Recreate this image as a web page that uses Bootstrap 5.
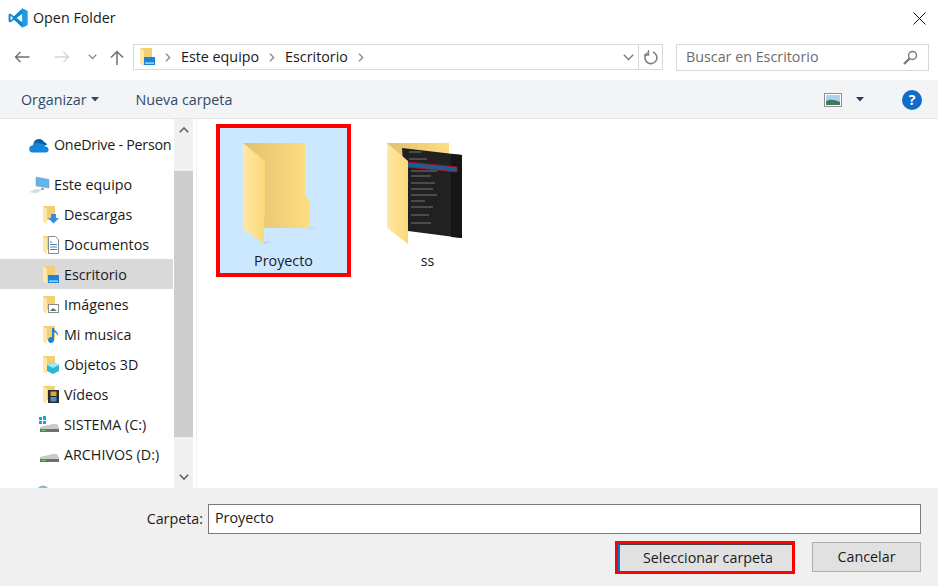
<!DOCTYPE html>
<html lang="es">
<head>
    <meta charset="UTF-8">
    <title>Open Folder</title>
    <link href="https://cdn.jsdelivr.net/npm/bootstrap@5.3.2/dist/css/bootstrap.min.css" rel="stylesheet">
    <script src="https://cdn.jsdelivr.net/npm/bootstrap@5.3.2/dist/js/bootstrap.bundle.min.js"></script>
    <style>
        html, body { height: 100%; overflow: hidden; }
        body { font-family: "Open Sans", "Noto Sans", sans-serif; font-size: 14.3px; color: #1a1a1a; background: #fff; }
        .dlg { width: 938px; height: 586px; }
        .title-bar { height: 36px; padding: 0 12px 0 8px; }
        .title-text { margin-left: 5px; }
        .nav-bar { height: 44px; padding: 0 9px 2px 14px; }
        .nav-chev { margin-left: 18px; }
        .nav-up { margin-left: 13px; }
        .addr-box { width: 530px; height: 26px; margin-left: 9px; border: 1px solid #d9d9d9; padding-left: 5px; }
        .addr-end { width: 24px; height: 100%; border-left: 1px solid #d9d9d9; }
        .addr-first { margin-left: 9px; }
        .crumb { margin: 0 10px; }
        .search-box { width: 253px; height: 27px; margin-left: 13px; border: 1px solid #d9d9d9; padding: 0 10px 0 9px; color: #6d6d6d; }
        .cmd-bar { height: 39px; background: #f3f4f6; border-bottom: 1px solid #e5e5e5; padding: 1px 16px 0 21px; color: #2e4a6b; }
        .new-folder { margin-left: 36px; }
        .view-caret { margin-left: 14px; }
        .help-mark { margin-left: 37px; }
        .main-area { height: 369px; overflow: hidden; }
        .side-pane { width: 173px; padding-top: 10px; overflow: hidden; flex: none; }
        .side-row { height: 30px; padding-top: 2px; white-space: nowrap; overflow: hidden; }
        .side-root { padding-left: 29px; }
        .side-sub { padding-left: 42px; }
        .side-row svg { flex: none; margin-right: 4px; }
        .side-tight { letter-spacing: -.25px; }
        .side-disk-row { padding-left: 38px; }
        .side-gap { height: 10px; }
        .side-on { background: #d9d9d9; }
        .side-last { padding-left: 36px; padding-top: 6px; }
        .scroll-col { width: 19px; margin-left: 1px; background: #f0f0f0; flex: none; }
        .scroll-btn { height: 35px; }
        .scroll-thumb { height: 266px; background: #cdcdcd; margin-top: 17px; }
        .scroll-end { height: 51px; }
        .files-pane { padding: 7px 0 0 21px; border-left: 1px solid #f0f0f0; margin-left: 3px; gap: 13px; }
        .file-tile { width: 131px; height: 149px; padding-top: 17px; }
        .file-on { background: #cce8ff; outline: 4px solid #f00; outline-offset: -2px; }
        .file-name { margin-top: 5px; }
        .foot-bar { height: 98px; background: #f0f0f0; padding: 16px 17px 0 0; }
        .foot-input { width: 713px; height: 30px; margin-left: 5px; background: #fff; border: 1px solid #7a7a7a; padding: 0 6px; line-height: 25px; }
        .foot-btns { margin-top: 8px; gap: 20px; }
        .win-btn { background: #e1e1e1; border: 1px solid #adadad; font-size: 14.3px; color: #1a1a1a; padding: 0; }
        .btn-select { width: 174px; height: 27px; padding-left: 4px; border: 0; border-left: 2px solid #0078d7; border-top: 1px solid #444; box-shadow: 0 0 0 3px #f00; }
        .btn-cancel { width: 109px; height: 30px; }
    </style>
</head>
<body>
<svg width="0" height="0" class="position-absolute">
    <defs>
        <linearGradient id="fBack" x1="0" x2="1" y1="0" y2="0"><stop offset="0" stop-color="#e2c070"/><stop offset="1" stop-color="#ffdd80"/></linearGradient>
        <linearGradient id="fFront" x1="0" x2="1" y1="0" y2="0"><stop offset="0" stop-color="#ffe8a6"/><stop offset="1" stop-color="#fbd878"/></linearGradient>
        <symbol id="mini-folder" viewBox="0 0 14 18">
            <path d="M1 0h12v14H5v4l-4-3z" fill="#f3cf73"/>
            <path d="M1 0l4 3v15l-4-3z" fill="#ffe8a6"/>
        </symbol>
    </defs>
</svg>

<div class="dlg d-flex flex-column">
    <div class="title-bar d-flex align-items-center">
        <svg width="20" height="20" viewBox="0 0 20 20"><path d="M14.300 .6 19.400 3v14l-5.100 2.400-8.400-7.700-3.600 2.800L.6 13.400V6.600l1.700-1.100 3.600 2.800z" fill="#0f85cf"/><path d="M14.400 5.600 8.600 10l5.800 4.400z" fill="#fff"/><path d="M2.600 7.400 5 10l-2.400 2.600z" fill="#fff"/><path d="M14.300 .6 19.400 3v14l-5.100 2.400z" fill="#1f9ce6"/></svg>
        <span class="title-text">Open Folder</span>
        <svg class="ms-auto" width="13" height="13" viewBox="0 0 13 13"><path d="M.5.5l12 12M12.500.5l-12 12" stroke="#111" fill="none"/></svg>
    </div>

    <div class="nav-bar d-flex align-items-center">
        <svg width="16" height="12" viewBox="0 0 16 12"><path d="M15.500 6H1.500M6.500 1l-5 5 5 5" fill="none" stroke="#6f6f6f" stroke-width="1.400"/></svg>
        <svg class="ms-4" width="16" height="12" viewBox="0 0 16 12"><path d="M.5 6h14M9.500 1l5 5-5 5" fill="none" stroke="#d4d4d4" stroke-width="1.400"/></svg>
        <svg class="nav-chev" width="9" height="6" viewBox="0 0 9 6"><path d="M.8.8l3.700 3.700L8.200.8" fill="none" stroke="#8a8a8a" stroke-width="1.300"/></svg>
        <svg class="nav-up" width="14" height="15" viewBox="0 0 14 15"><path d="M7 15V1.500M1 7.500l6-6 6 6" fill="none" stroke="#6f6f6f" stroke-width="1.500"/></svg>
        <div class="addr-box d-flex align-items-center">
            <svg width="17" height="18" viewBox="0 0 17 18"><use href="#mini-folder" width="14" height="18"/><rect x="5" y="9" width="11" height="8" fill="#1b84d6"/><rect x="6" y="14.500" width="9" height="1.200" fill="#cfe6f8"/></svg>
            <svg class="addr-first" width="6" height="9" viewBox="0 0 6 9"><path d="M1 .8l3.700 3.700L1 8.200" fill="none" stroke="#8a8a8a" stroke-width="1.300"/></svg>
            <span class="crumb">Este equipo</span>
            <svg width="6" height="9" viewBox="0 0 6 9"><path d="M1 .8l3.700 3.700L1 8.200" fill="none" stroke="#8a8a8a" stroke-width="1.300"/></svg>
            <span class="crumb">Escritorio</span>
            <svg width="6" height="9" viewBox="0 0 6 9"><path d="M1 .8l3.700 3.700L1 8.200" fill="none" stroke="#8a8a8a" stroke-width="1.300"/></svg>
            <svg class="ms-auto me-1" width="11" height="7" viewBox="0 0 11 7"><path d="M.8.8l4.700 4.700L10.200.8" fill="none" stroke="#7a7a7a" stroke-width="1.400"/></svg>
            <div class="addr-end d-flex align-items-center justify-content-center">
                <svg width="15" height="15" viewBox="0 0 15 15"><path d="M4.600 2.600A6 6 0 1 0 10 2" fill="none" stroke="#7f7f7f" stroke-width="1.600"/><path d="M5.500 0v5H1" fill="none" stroke="#7f7f7f" stroke-width="1.300"/></svg>
            </div>
        </div>
        <div class="search-box d-flex align-items-center justify-content-between">
            <span>Buscar en Escritorio</span>
            <svg width="15" height="15" viewBox="0 0 15 15"><circle cx="9.500" cy="5.500" r="4" fill="none" stroke="#7a7a7a" stroke-width="1.500"/><path d="M6.400 8.600 1 14" stroke="#7a7a7a" stroke-width="2.300"/></svg>
        </div>
    </div>

    <div class="cmd-bar d-flex align-items-center">
        <span>Organizar</span>
        <svg class="ms-1" width="9" height="5" viewBox="0 0 9 5"><path d="M0 0h8L4 4.500z" fill="#2e4a6b"/></svg>
        <span class="new-folder">Nueva carpeta</span>
        <svg class="ms-auto" width="18" height="14" viewBox="0 0 18 14"><rect x=".5" y=".5" width="17" height="13" fill="#fff" stroke="#8e8e8e"/><rect x="2" y="2" width="14" height="10" fill="#a9d3ee"/><path d="M2 8.500c3-2.500 8-2 14 .5v3H2z" fill="#3f7a5d"/></svg>
        <svg class="view-caret" width="9" height="5" viewBox="0 0 9 5"><path d="M0 0h8L4 4.500z" fill="#2e3f5c"/></svg>
        <svg class="help-mark" width="20" height="20" viewBox="0 0 20 20"><circle cx="10" cy="10" r="10" fill="#0f6cc8"/><text x="10" y="15" text-anchor="middle" font-family="Open Sans, sans-serif" font-size="14" font-weight="700" fill="#fff">?</text></svg>
    </div>

    <div class="main-area d-flex">
        <div class="side-pane">
            <div class="side-row side-root d-flex align-items-center">
                <svg width="21" height="15" viewBox="0 0 21 15"><path d="M5 9a5.500 5.500 0 0 1 10-5 4 4 0 0 1 3 3z" fill="#0a5aa8"/><path d="M4 14.500a3.500 3.500 0 0 1-.5-7A4.500 4.500 0 0 1 11 6a3.500 3.500 0 0 1 5 2.500 3 3 0 0 1 1 6z" fill="#1486dc"/></svg>
                <span class="side-tight">OneDrive - Person</span>
            </div>
            <div class="side-gap"></div>
            <div class="side-row side-root d-flex align-items-center">
                <svg width="21" height="18" viewBox="0 0 21 18"><path d="M7 1l13 2.500v8.500L7 10z" fill="#5eb6ec" stroke="#8aa0b0" stroke-width=".6"/><path d="M12 12h3v2h-3z" fill="#9aa7b0"/><path d="M0 16l7-3 6 1-6 3.500z" fill="#d8dde0"/></svg>
                <span>Este equipo</span>
            </div>
            <div class="side-row side-sub d-flex align-items-center">
                <svg width="18" height="18" viewBox="0 0 18 18"><use href="#mini-folder" width="14" height="18"/><path d="M9 8h5v4h3l-5.500 5.500L6 12h3z" fill="#3b8ddb"/></svg>
                <span>Descargas</span>
            </div>
            <div class="side-row side-sub d-flex align-items-center">
                <svg width="18" height="18" viewBox="0 0 18 18"><use href="#mini-folder" width="14" height="18"/><path d="M6.500.500h7l3 3v14h-10z" fill="#fff" stroke="#8a8a8a"/><path d="M8 6h2M8 8.500h7M8 11h7M8 13.500h7" stroke="#4a86c5"/></svg>
                <span>Documentos</span>
            </div>
            <div class="side-row side-sub side-on d-flex align-items-center">
                <svg width="18" height="18" viewBox="0 0 18 18"><use href="#mini-folder" width="14" height="18"/><rect x="6" y="9" width="11" height="8" fill="#1b84d6"/><rect x="7" y="14.500" width="9" height="1.200" fill="#cfe6f8"/></svg>
                <span>Escritorio</span>
            </div>
            <div class="side-row side-sub d-flex align-items-center">
                <svg width="18" height="18" viewBox="0 0 18 18"><use href="#mini-folder" width="14" height="18"/><rect x="6.500" y="8.500" width="10" height="8" fill="#fff" stroke="#8a8a8a"/><path d="M8 15l3-3 4 3z" fill="#4d7c66"/></svg>
                <span>Imágenes</span>
            </div>
            <div class="side-row side-sub d-flex align-items-center">
                <svg width="18" height="18" viewBox="0 0 18 18"><use href="#mini-folder" width="14" height="18"/><path d="M10 2h2c0 3 4 3 4 7h-1c0-2-2-2.500-3-3v8a3 3 0 1 1-2-2.800z" fill="#1b84d6"/></svg>
                <span>Mi musica</span>
            </div>
            <div class="side-row side-sub d-flex align-items-center">
                <svg width="18" height="18" viewBox="0 0 18 18"><use href="#mini-folder" width="14" height="18"/><path d="M5 9l6-3 6 3v6l-6 3-6-3z" fill="#2eb5d6"/><path d="M5 9l6 3 6-3-6-3z" fill="#a5e6f2"/></svg>
                <span>Objetos 3D</span>
            </div>
            <div class="side-row side-sub d-flex align-items-center">
                <svg width="18" height="18" viewBox="0 0 18 18"><use href="#mini-folder" width="14" height="18"/><rect x="6" y="4" width="11" height="13" fill="#2c2c2c"/><rect x="8.500" y="5.500" width="6" height="4.500" fill="#d9a441"/><rect x="8.500" y="11" width="6" height="4.500" fill="#4a8fd0"/></svg>
                <span>Vídeos</span>
            </div>
            <div class="side-row side-disk-row d-flex align-items-center">
                <svg width="22" height="18" viewBox="0 0 22 18"><path d="M1 1h3v3H1zM5 0h3v4H5zM1 5h3v3H1zM5 5h3v3H5z" fill="#12a5e8"/><path d="M2 11l13-3h4l2 3.500V14H2z" fill="#c9c9c9"/><path d="M2 13h19v3H2z" fill="#6e6e6e"/><path d="M3.500 14.500h4" stroke="#5fd36a"/></svg>
                <span>SISTEMA (C:)</span>
            </div>
            <div class="side-row side-disk-row d-flex align-items-center">
                <svg width="22" height="18" viewBox="0 0 22 18"><path d="M2 11l13-3h4l2 3.500V14H2z" fill="#c9c9c9"/><path d="M2 13h19v3H2z" fill="#6e6e6e"/><path d="M3.500 14.500h4" stroke="#5fd36a"/></svg>
                <span>ARCHIVOS (D:)</span>
            </div>
            <div class="side-gap"></div>
            <div class="side-row side-last d-flex align-items-start">
                <svg width="14" height="14" viewBox="0 0 14 14"><circle cx="7" cy="7" r="6.500" fill="#8fb9d2"/></svg>
            </div>
        </div>
        <div class="scroll-col">
            <div class="scroll-btn d-flex justify-content-center pt-2">
                <svg width="10" height="6" viewBox="0 0 10 6"><path d="M.8 5.200 5 1l4.200 4.200" fill="none" stroke="#606060" stroke-width="1.600"/></svg>
            </div>
            <div class="scroll-thumb"></div>
            <div class="scroll-end d-flex justify-content-center align-items-end pb-2">
                <svg width="10" height="6" viewBox="0 0 10 6"><path d="M.8.800 5 5l4.200-4.200" fill="none" stroke="#606060" stroke-width="1.600"/></svg>
            </div>
        </div>
        <div class="files-pane flex-grow-1 d-flex align-items-start">
            <div class="file-tile file-on d-flex flex-column align-items-center text-center">
                <svg width="81" height="102" viewBox="0 0 81 102">
                    <path d="M67 85l8-1-8 2zM21 101l8-3-8 1z" fill="#b9cfe0"/>
                    <path d="M0 0h62v52l5 6v27H21z" fill="url(#fBack)"/>
                    <path d="M0 0l22 18v54l-1 3v26L0 85z" fill="url(#fFront)"/>
                </svg>
                <span class="file-name">Proyecto</span>
            </div>
            <div class="file-tile d-flex flex-column align-items-center text-center">
                <svg width="81" height="102" viewBox="0 0 81 102">
                    <path d="M0 0h62v30H0z" fill="url(#fBack)"/>
                    <path d="M15 5l60 7v83l-54-7z" fill="#212121"/>
                    <path d="M64 11l11 1v83l-11-1z" fill="#161616"/>
                    <path d="M20 19l50 5v5l-50-5z" fill="#1a5f94" stroke="#b01020"/>
                    <path d="M22 9h12M22 16h18M24 28h26M24 33h20M24 40h24M24 46h22M24 52h26M24 58h14M24 64h22M24 72h18M24 80h20" stroke="#77777a"/>
                    <path d="M0 0l21 18v83L0 85z" fill="url(#fFront)"/>
                </svg>
                <span class="file-name">ss</span>
            </div>
        </div>
    </div>

    <div class="foot-bar flex-grow-1">
        <div class="d-flex align-items-center justify-content-end">
            <span>Carpeta:</span>
            <div class="foot-input">Proyecto</div>
        </div>
        <div class="foot-btns d-flex justify-content-end align-items-center">
            <button type="button" class="win-btn btn-select">Seleccionar carpeta</button>
            <button type="button" class="win-btn btn-cancel">Cancelar</button>
        </div>
    </div>
</div>
</body>
</html>
